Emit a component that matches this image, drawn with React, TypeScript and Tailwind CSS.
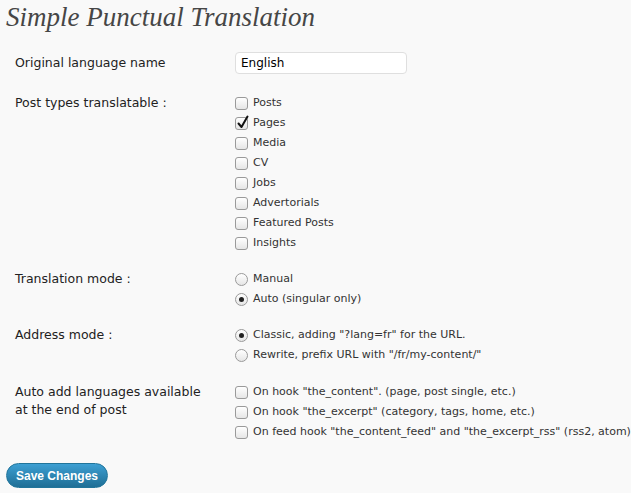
import React from 'react';

const labelFont = { fontFamily: '"DejaVu Sans", "Liberation Sans", sans-serif' };

const CheckBox = ({ checked = false }: { checked?: boolean }) => (
  <span className="relative mr-[4px] inline-block h-[13px] w-[13px] shrink-0 rounded-[3px] border border-[#9a9a9a] bg-gradient-to-b from-white to-[#e6e6e6]">
    {checked && (
      <svg className="absolute left-[1px] top-[-3px]" width="12" height="14" viewBox="0 0 12 14">
        <path d="M1.5 8.5 L4.5 12 L10.5 1.5" fill="none" stroke="#111" strokeWidth="2" strokeLinecap="round" strokeLinejoin="round" />
      </svg>
    )}
  </span>
);

const Radio = ({ checked = false }: { checked?: boolean }) => (
  <span className="mr-[4px] flex h-[13px] w-[13px] shrink-0 items-center justify-center rounded-full border border-[#9a9a9a] bg-gradient-to-b from-white to-[#e6e6e6]">
    {checked && <span className="h-[5px] w-[5px] rounded-full bg-[#222]" />}
  </span>
);

const Option = ({ children, type, checked }: { children: React.ReactNode; type: 'check' | 'radio'; checked?: boolean }) => (
  <label className="flex h-[20px] items-center text-[11px] text-[#333]" style={labelFont}>
    {type === 'check' ? <CheckBox checked={checked} /> : <Radio checked={checked} />}
    <span className="ml-[1px]">{children}</span>
  </label>
);

const Row = ({ label, children, className = '' }: { label: React.ReactNode; children: React.ReactNode; className?: string }) => (
  <div className={`flex ${className}`}>
    <div className="w-[220px] shrink-0 pt-[1px] text-[12.5px] leading-[18px] text-[#222]" style={labelFont}>
      {label}
    </div>
    <div className="flex flex-col">{children}</div>
  </div>
);

const App = () => {
  const postTypes = ['Posts', 'Pages', 'Media', 'CV', 'Jobs', 'Advertorials', 'Featured Posts', 'Insights'];
  return (
    <div className="min-h-[493px] w-[631px] bg-[#f9f9f9] pl-[15px]">
      <h2
        className="-ml-[9px] pt-[2px] text-[27px] italic leading-[30px] text-[#464646]"
        style={{ fontFamily: '"Liberation Serif", Georgia, serif' }}
      >
        Simple Punctual Translation
      </h2>
      <div className="mt-[20px] flex flex-col">
        <Row label={<div className="pt-[1px]">Original language name</div>}>
          <input
            defaultValue="English"
            className="h-[22px] w-[172px] rounded-[4px] border border-[#dfdfdf] bg-white px-[5px] text-[12px] text-black outline-none"
            style={labelFont}
          />
        </Row>
        <Row label="Post types translatable :" className="mt-[19px]">
          {postTypes.map(t => (
            <Option key={t} type="check" checked={t === 'Pages'}>
              {t}
            </Option>
          ))}
        </Row>
        <Row label="Translation mode :" className="mt-[16px]">
          <Option type="radio">Manual</Option>
          <Option type="radio" checked>
            Auto (singular only)
          </Option>
        </Row>
        <Row label="Address mode :" className="mt-[16px]">
          <Option type="radio" checked>
            Classic, adding "?lang=fr" for the URL.
          </Option>
          <Option type="radio">Rewrite, prefix URL with "/fr/my-content/"</Option>
        </Row>
        <Row
          label={
            <>
              Auto add languages available
              <br />
              at the end of post
            </>
          }
          className="mt-[17px]"
        >
          <Option type="check">On hook "the_content". (page, post single, etc.)</Option>
          <Option type="check">On hook "the_excerpt" (category, tags, home, etc.)</Option>
          <Option type="check">On feed hook "the_content_feed" and "the_excerpt_rss" (rss2, atom)</Option>
        </Row>
      </div>
      <button
        className="-ml-[9px] mt-[21px] h-[25px] w-[102px] rounded-full border border-[#21759b] bg-gradient-to-b from-[#3d9fd3] to-[#1f6f96] text-[12px] font-bold text-white"
        style={{ fontFamily: '"Liberation Sans", Arial, sans-serif' }}
      >
        Save Changes
      </button>
    </div>
  );
};

export default App;
